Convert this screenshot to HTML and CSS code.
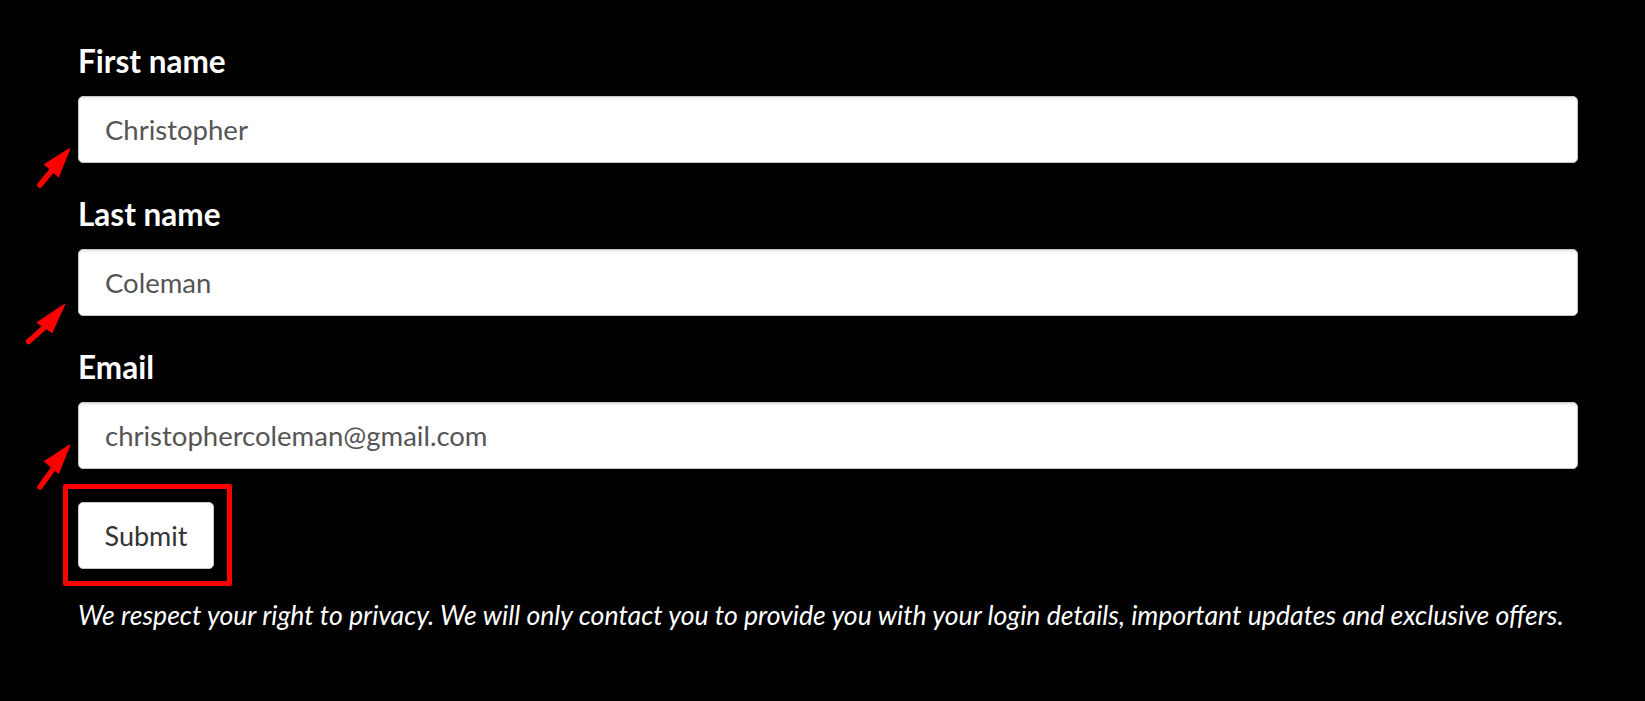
FILE: index.html
```html
<!DOCTYPE html>
<html lang="en">
<head>
<meta charset="utf-8">
<title>Sign up form</title>
<link rel="stylesheet" href="styles.css">
</head>
<body>
<main class="page">
  <form class="form">
    <div class="field">
      <label class="label" for="first">First name</label>
      <input class="input" id="first" type="text" value="Christopher">
    </div>
    <div class="field">
      <label class="label" for="last">Last name</label>
      <input class="input" id="last" type="text" value="Coleman">
    </div>
    <div class="field">
      <label class="label" for="email">Email</label>
      <input class="input" id="email" type="text" value="christophercoleman@gmail.com">
    </div>
    <div class="actions">
      <button class="button" type="button">Submit</button>
    </div>
    <p class="privacy">We respect your right to privacy. We will only contact you to provide you with your login details, important updates and exclusive offers.</p>
  </form>

  <svg class="annotations" viewBox="0 0 1645 701" width="1645" height="701" aria-hidden="true">
    <g fill="#ff0000" stroke="#ff0000" stroke-linecap="round" stroke-linejoin="round">
      <line x1="40" y1="185" x2="53" y2="169" stroke-width="5.5"/>
      <polygon points="69.5,149 45,164.5 58.5,176.5" stroke-width="1.5"/>
      <line x1="28.5" y1="341.5" x2="46" y2="326" stroke-width="5.5"/>
      <polygon points="64.5,304.5 37.5,322.5 52,332" stroke-width="1.5"/>
      <line x1="40" y1="487" x2="53" y2="469" stroke-width="5.5"/>
      <polygon points="69.5,445.5 45,461.5 58.5,473" stroke-width="1.5"/>
    </g>
  </svg>
  <div class="highlight"></div>
</main>
</body>
</html>
```

FILE: styles.css
```css
html, body {
  margin: 0;
  padding: 0;
  background: #000;
}

body {
  font-family: "Lato", "Open Sans", "Liberation Sans", sans-serif;
  color: #fff;
}

.page {
  position: relative;
  width: 1645px;
  height: 701px;
  overflow: hidden;
}

.form {
  display: flex;
  flex-direction: column;
  padding: 43px 0 0 78px;
  width: 1500px;
}

.field {
  display: flex;
  flex-direction: column;
  gap: 17px;
  margin-bottom: 33px;
}

.field:last-of-type {
  margin-bottom: 32px;
}

.label {
  font-size: 31.5px;
  font-weight: 700;
  line-height: 36px;
  color: #fff;
}

.input {
  box-sizing: border-box;
  width: 100%;
  height: 67px;
  margin: 0;
  padding: 0 26px;
  border: 1px solid #c6c6c6;
  border-radius: 5px;
  background: #fff;
  box-shadow: inset 0 2px 2px rgba(0, 0, 0, 0.08);
  font-family: inherit;
  font-size: 27.5px;
  color: #555;
  outline: none;
}

.actions {
  display: flex;
}

.button {
  box-sizing: border-box;
  width: 136px;
  height: 67px;
  margin: 0;
  padding: 0;
  border: 1px solid #c6c6c6;
  border-radius: 5px;
  background: #fff;
  font-family: inherit;
  font-size: 27px;
  color: #333;
}

.privacy {
  margin: 30px 0 0;
  font-size: 26.65px;
  line-height: 32px;
  font-style: italic;
  color: #fff;
  white-space: nowrap;
}

.annotations {
  position: absolute;
  left: 0;
  top: 0;
  pointer-events: none;
}

.highlight {
  position: absolute;
  left: 63px;
  top: 484px;
  box-sizing: border-box;
  width: 169px;
  height: 102px;
  border: 5.5px solid #ff0000;
  border-radius: 2px;
}
```
